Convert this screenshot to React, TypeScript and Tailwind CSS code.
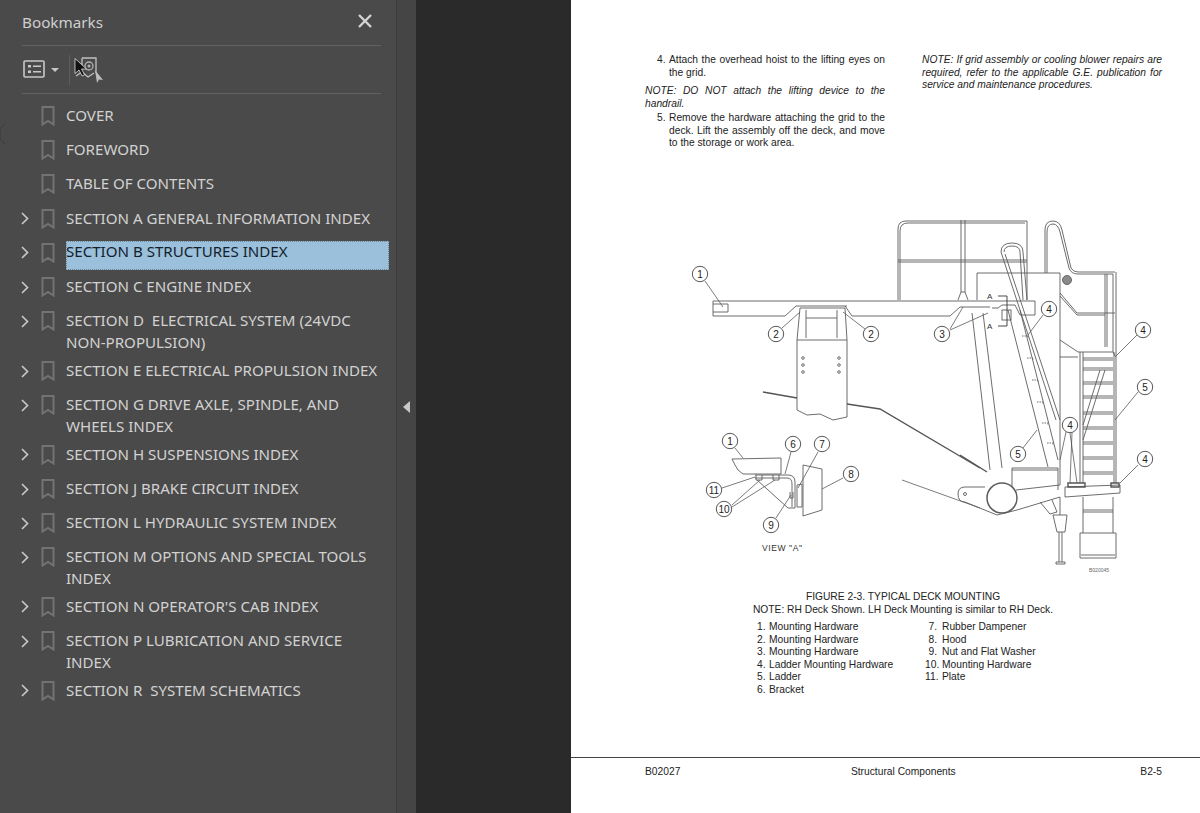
const bookmarks = [
  { title: "COVER", arrow: false },
  { title: "FOREWORD", arrow: false },
  { title: "TABLE OF CONTENTS", arrow: false },
  { title: "SECTION A GENERAL INFORMATION INDEX", arrow: true },
  { title: "SECTION B STRUCTURES INDEX", arrow: true, selected: true },
  { title: "SECTION C ENGINE INDEX", arrow: true },
  { title: "SECTION D  ELECTRICAL SYSTEM (24VDC NON-PROPULSION)", arrow: true },
  { title: "SECTION E ELECTRICAL PROPULSION INDEX", arrow: true },
  { title: "SECTION G DRIVE AXLE, SPINDLE, AND WHEELS INDEX", arrow: true },
  { title: "SECTION H SUSPENSIONS INDEX", arrow: true },
  { title: "SECTION J BRAKE CIRCUIT INDEX", arrow: true },
  { title: "SECTION L HYDRAULIC SYSTEM INDEX", arrow: true },
  { title: "SECTION M OPTIONS AND SPECIAL TOOLS INDEX", arrow: true },
  { title: "SECTION N OPERATOR'S CAB INDEX", arrow: true },
  { title: "SECTION P LUBRICATION AND SERVICE INDEX", arrow: true },
  { title: "SECTION R  SYSTEM SCHEMATICS", arrow: true },
];

const partsLeft = [
  "Mounting Hardware",
  "Mounting Hardware",
  "Mounting Hardware",
  "Ladder Mounting Hardware",
  "Ladder",
  "Bracket",
];
const partsRight = [
  "Rubber Dampener",
  "Hood",
  "Nut and Flat Washer",
  "Mounting Hardware",
  "Plate",
];

// x, y, label
const callouts: [number, number, string][] = [
  [700, 274, "1"],
  [776, 334, "2"],
  [871, 334, "2"],
  [942, 334, "3"],
  [1049, 309, "4"],
  [1143, 330, "4"],
  [1145, 387, "5"],
  [1070, 425, "4"],
  [1018, 454, "5"],
  [1145, 459, "4"],
  [730, 441, "1"],
  [793, 444, "6"],
  [822, 444, "7"],
  [851, 474, "8"],
  [714, 490, "11"],
  [724, 509, "10"],
  [771, 525, "9"],
];

const thin = [
  "M705 281L723 307",
  "M782 328L800 312",
  "M865 329L843 312",
  "M950 329L963 307",
  "M950 330L988 313",
  "M1043 315L1028 335",
  "M1137 335L1115 357",
  "M1138 392L1115 420",
  "M1023 448L1037 430",
  "M1066 432L1060 460",
  "M1070 433L1077 483",
  "M1072 433L1070 483",
  "M1138 465L1120 483",
  "M735 448L743 458",
  "M791 452L785 474",
  "M818 452L798 488",
  "M843 478L822 489",
  "M722 488L755 477",
  "M732 505L760 480",
  "M732 507L775 480",
  "M776 518L791 495",
  "M902 480L980 508",
];

const medium = [
  // deck
  "M713 301H1035V315H1020L1015 305H1002L998 308H992",
  "M713 301V316H785L796 306",
  "M852 316H950L960 307",
  "M845 306L852 316",
  "M713 304H728V312H713",
  "M796 306H847M960 307H990",
  // pedestal
  "M797 400V340L800 308H845L847 340V417",
  "M797 400V410L807 415L820 414L833 420L847 417",
  "M797 340H847",
  "M806 310V338M837 310V338M806 318H837",
  // left rail
  "M898 300V229Q898 221 906 221H1027V300",
  "M900 300V231Q900 223 908 223H1025",
  "M898 260H1027M898 262H1027",
  "M961 220V292M965 220V292M958 300L961 292H965L968 300",
  // cab
  "M977 300V273H1060V485",
  "M1060 293L1077 313H1105M1060 296L1077 315H1105M1105 313H1115",
  "M1060 340L1078 352M1060 357H1078",
  // ladder hoop
  "M1001 252Q1001 243 1012 243Q1023 243 1023 252L1027 300",
  "M1004 252Q1004 246 1012 246Q1020 246 1020 252L1023 300",
  "M1001 252L1056 420M1005 254L1060 420",
  "M1008 310L1048 467M1020 310L1058 460",
  // rear rail
  "M1045 273V230Q1045 221 1053 221Q1060 221 1062 230L1071 268Q1073 272 1078 272H1115",
  "M1047 273V232Q1047 224 1053 224Q1058 224 1060 232L1069 268Q1071 274 1078 274H1113",
  "M1105 274V347M1107 274V347",
  "M1113 274V352M1116 272V483M1114 352V483",
  // stairs
  "M1078 352H1113L1115 356M1080 352V483M1083 352V483",
  "M1083 358H1113M1083 368H1113M1083 382H1113M1083 396H1113M1083 412H1113M1083 427H1113M1083 442H1113M1083 457H1113M1083 472H1113",
  "M1083 360H1113M1083 370H1113M1083 384H1113M1083 398H1113M1083 414H1113M1083 429H1113M1083 444H1113M1083 459H1113M1083 474H1113",
  "M1105 370L1083 440M1100 370L1083 425",
  // platform and lower ladder
  "M1065 487L1120 485V493L1065 497Z",
  "M1083 497V533M1113 497V533M1080 533V558H1116V533",
  "M1083 510H1113M1080 533H1116M1083 512H1113M1081 555H1115",
  // arm
  "M972 313L990 470M983 313L1002 468",
  "M985 487H965Q958 487 958 494Q958 502 965 502L997 515L1017 510L1060 497",
  "M1012 487V468H1058V490M1012 470H1058",
  "M1016 490L1060 485",
  "M1040 502L1050 514L1057 512L1052 500",
  "M1053 515H1067L1065 532H1057ZM1059 532V562M1062 532V562M1056 562H1065V564H1056Z",
  "M1060 497V515",
  // view A
  "M732 459L781 458V474H743L738 470L735 465Z",
  "M755 475H788Q795 475 795 482V508H788L757 480",
  "M755 478H787Q792 478 792 484V507",
  "M797 485L802 484V507H797Z",
  "M803 465L822 469V510L803 516Z",
  "M756 475V480H762V475M773 475V480H779V475M790 492V498H793V492",
];

const heavy = [
  "M763 392L797 398",
  "M847 404L880 409L980 468",
  "M960 455L987 472",
  "M1068 483H1085V487H1068ZM1111 483H1119V487H1111Z",
];

const dashes = [
  [1022, 336],
  [1027, 358],
  [1032, 380],
  [1037, 402],
  [1042, 423],
  [1047, 443],
];

function Diagram() {
  return (
    <svg viewBox="680 210 490 370" className="block h-[370px] w-[490px]" fontFamily="Liberation Sans, sans-serif">
      <g fill="none" stroke="#5c5c5c" strokeWidth="0.9" className="blur-[0.3px]">
        {thin.map((d) => (
          <path key={d} d={d} stroke="#444" strokeWidth="0.7" />
        ))}
        {medium.map((d) => (
          <path key={d} d={d} />
        ))}
        {heavy.map((d) => (
          <path key={d} d={d} stroke="#555" strokeWidth="1.4" />
        ))}
        {dashes.map(([x, y]) => (
          <path key={x} d={`M${x} ${y}h6v2`} strokeDasharray="1.5 1" />
        ))}
        <circle cx="1002" cy="498" r="15" fill="white" strokeWidth="1.5" />
        <circle cx="1067" cy="280" r="4.5" fill="#8a8a8a" />
        <circle cx="965" cy="494" r="1.5" />
        <rect x="1002" y="310" width="9" height="10" />
        <path d="M1007 296V326M998 296H1007M998 326H1007" stroke="#333" />
        {[803, 839].map((x) =>
          [358, 365, 372].map((y) => <circle key={`${x}-${y}`} cx={x} cy={y} r="1.3" />)
        )}
      </g>
      {callouts.map(([x, y, label], i) => (
        <g key={i}>
          <circle cx={x} cy={y} r="7.7" fill="white" stroke="#444" strokeWidth="0.9" />
          <text x={x} y={y + 3.5} fontSize="10" textAnchor="middle" fill="#222">
            {label}
          </text>
        </g>
      ))}
      <g fontSize="8" fill="#333">
        <text x="987" y="299">A</text>
        <text x="987" y="329">A</text>
      </g>
      <text x="762" y="551" fontSize="8.5" letterSpacing="0.6" fill="#333">
        {'VIEW "A"'}
      </text>
      <text x="1089" y="572" fontSize="5" fill="#666">
        B020045
      </text>
    </svg>
  );
}

function BookmarkIcon() {
  return (
    <svg width="14" height="20" viewBox="0 0 14 20" fill="none" stroke="#737373" strokeWidth="2">
      <path d="M1.500 1h11v17.500l-5.500-3.500-5.500 3.500z" />
    </svg>
  );
}

function Sidebar() {
  return (
    <div className="flex w-[391px] shrink-0 flex-col bg-[#4a4a4a] pl-[17px] pr-[7px] font-['Noto_Sans',sans-serif] text-[#d2d2d2]">
      <div className="mr-[8px] flex h-[46px] shrink-0 items-center justify-between border-b border-[#626262]">
        <span className="text-[15.25px] text-[#cfcfcf]">Bookmarks</span>
        <svg width="14" height="14" viewBox="0 0 14 14" className="mr-[9px] -mt-[3px]" stroke="#d4d4d4" strokeWidth="2.4">
          <path d="M1 1l12 12M13 1L1 13" />
        </svg>
      </div>
      <div className="relative mr-[8px] flex h-[48px] shrink-0 items-center border-b border-[#626262]">
        <svg width="22" height="18" viewBox="0 0 22 18" className="ml-[1px] -mt-[1px]" fill="none">
          <rect x="1" y="1" width="20" height="16" rx="1" stroke="#c8c8c8" strokeWidth="1.6" />
          <path d="M5 5h3v2.500H5zM5 10.500h3V13H5z" fill="#c8c8c8" />
          <path d="M10 6.200h8M10 11.700h8" stroke="#c8c8c8" strokeWidth="1.6" />
        </svg>
        <svg width="8" height="4" viewBox="0 0 8 4" className="ml-[6px] mt-[1px]">
          <path d="M0 0h8L4 4z" fill="#c8c8c8" />
        </svg>
        <div className="ml-[10px] h-[30px] w-px bg-[#5c5c5c]" />
        <svg width="30" height="28" viewBox="0 0 30 28" className="ml-[4px]" fill="none">
          <path d="M8 2h14v15M8 2v11" stroke="#c0c0c0" strokeWidth="1.300" />
          <circle cx="15" cy="10" r="4" stroke="#b0b0b0" strokeWidth="1.300" />
          <circle cx="15" cy="10" r="1.500" fill="#b0b0b0" />
          <path d="M2 20l6-4 6 5 6-4" stroke="#c0c0c0" strokeWidth="1.300" />
          <path d="M21 14l8 10-4-.5-2 3.500z" fill="#bcbcbc" />
        </svg>
        {/* mouse pointer */}
        <svg width="13" height="21" viewBox="0 0 13 20" className="absolute left-[52px] top-[11px]">
          <path d="M1 1v15l4-3.500 3 6 2.500-1.200-3-5.800h5z" fill="#111" stroke="#ddd" strokeWidth="0.800" />
        </svg>
      </div>
      <div className="pt-[5px]">
        {bookmarks.map((b) => (
          <div key={b.title} className="flex min-h-[34.2px] pt-[6px] text-[15.1px] leading-[21.8px]">
            <div className="-ml-[1px] flex h-[22px] w-[20px] shrink-0 items-center">
              {b.arrow && (
                <svg width="8" height="13" viewBox="0 0 8 13" fill="none" stroke="#c6c6c6" strokeWidth="1.700">
                  <path d="M1 1l5.500 5.500L1 12" />
                </svg>
              )}
            </div>
            <div className="h-[22px] w-[25px] shrink-0 pt-[1px]">
              <BookmarkIcon />
            </div>
            {b.selected ? (
              <span className="-mt-[0.5px] block h-[29px] w-[323px] whitespace-pre-wrap bg-[#9ac0dc] text-[#16202a] outline-1 -outline-offset-1 outline-dotted outline-[#6f8797]">
                {b.title}
              </span>
            ) : (
              <span className="block w-[323px] whitespace-pre-wrap">{b.title}</span>
            )}
          </div>
        ))}
      </div>
    </div>
  );
}

function PdfPage() {
  return (
    <div className="flex h-full w-[629px] shrink-0 flex-col bg-white font-['Liberation_Sans',Arial,sans-serif] text-[10.25px] leading-[12.5px] text-[#222]">
      <div className="flex h-[210px] shrink-0 pl-[74px] pt-[54px]">
        <div className="w-[240px]">
          <div className="flex">
            <span className="w-[24px] shrink-0 pl-[12px]">4.</span>
            <p className="text-justify">Attach the overhead hoist to the lifting eyes on the grid.</p>
          </div>
          <p className="mt-[6px] text-justify italic">NOTE: DO NOT attach the lifting device to the handrail.</p>
          <div className="mt-[2px] flex">
            <span className="w-[24px] shrink-0 pl-[12px]">5.</span>
            <p className="text-justify">
              Remove the hardware attaching the grid to the deck. Lift the assembly off the deck, and move to the
              storage or work area.
            </p>
          </div>
        </div>
        <p className="ml-[37px] w-[240px] text-justify italic">
          NOTE: If grid assembly or cooling blower repairs are required, refer to the applicable G.E. publication for
          service and maintenance procedures.
        </p>
      </div>
      <div className="shrink-0 pl-[109px]">
        <Diagram />
      </div>
      <div className="mt-[11px] shrink-0 pl-[74px] text-center">
        <div className="w-[516px]">FIGURE 2-3. TYPICAL DECK MOUNTING</div>
        <div className="w-[516px]">NOTE: RH Deck Shown. LH Deck Mounting is similar to RH Deck.</div>
      </div>
      <div className="mt-[5px] flex shrink-0 pl-[186px]">
        <div className="w-[168px]">
          {partsLeft.map((p, i) => (
            <div key={i} className="flex">
              <span className="w-[12px]">{i + 1}.</span>
              <span>{p}</span>
            </div>
          ))}
        </div>
        <div>
          {partsRight.map((p, i) => (
            <div key={i} className="flex">
              <span className="w-[12px] text-right">{i + 7}.</span>
              <span className="ml-[5px]">{p}</span>
            </div>
          ))}
        </div>
      </div>
      <div className="mt-auto flex h-[56px] shrink-0 justify-between border-t border-[#444] pl-[74px] pr-[38px] pt-[8px]">
        <span>B02027</span>
        <span className="-ml-[14px]">Structural Components</span>
        <span>B2-5</span>
      </div>
    </div>
  );
}

export default function App() {
  return (
    <div className="flex h-[813px] w-[1200px] overflow-hidden bg-[#2a2a2a]">
      <div className="flex w-[5px] shrink-0 flex-col bg-[#4a4a4a] pt-[124px]">
        {/* panel tab notch */}
        <svg width="5" height="20" viewBox="0 0 5 20" fill="none" stroke="#3a3a3a">
          <path d="M5 0L0 5V15L5 20" />
        </svg>
      </div>
      <Sidebar />
      <div className="flex w-[20px] shrink-0 items-center justify-center border-l border-[#3c3c3c] bg-[#454545]">
        <svg width="7" height="12" viewBox="0 0 7 12">
          <path d="M7 0v12L0 6z" fill="#c8c8c8" />
        </svg>
      </div>
      <div className="w-[155px] shrink-0" />
      <PdfPage />
    </div>
  );
}
